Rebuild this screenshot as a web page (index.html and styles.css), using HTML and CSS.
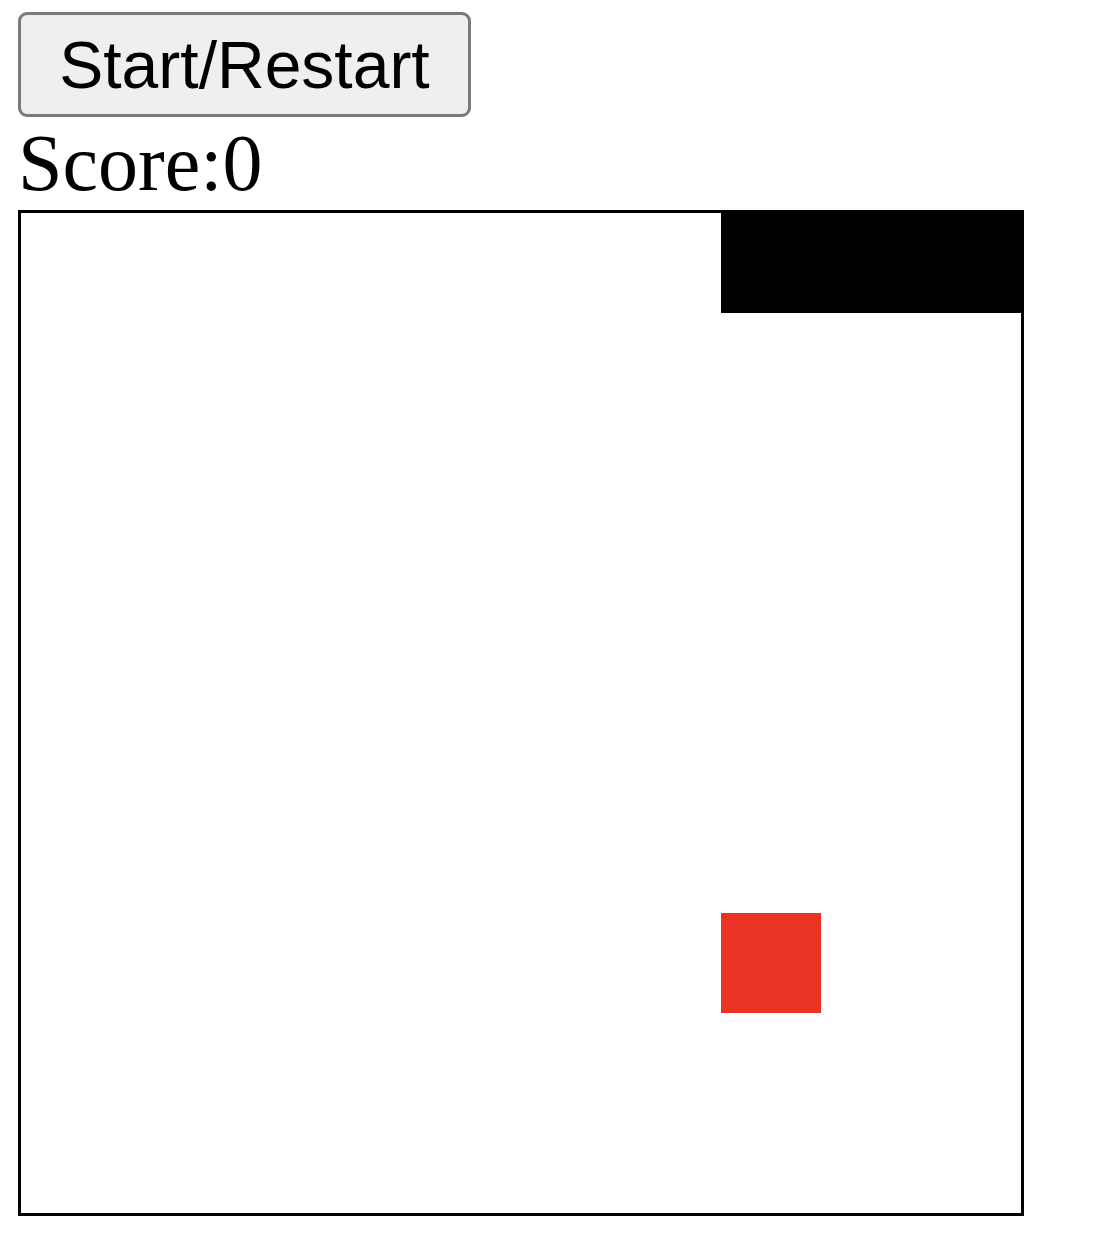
FILE: index.html
```html
<!DOCTYPE html>
<html lang="en">

<head>
  <meta charset="UTF-8" />
  <title>Snake</title>
  <link rel="stylesheet" href="styles.css">
</head>

<body>
  <button class="startBtn">Start/Restart</button>
  <div class="score">Score:<span id="score">0</span></div>
  <div class="board">
    <div class="snake"></div>
    <div class="food"></div>
  </div>
</body>

</html>
```

FILE: styles.css
```css
body {
  margin: 0;
  padding: 12px 18px;
  background: #ffffff;
  font-family: "Liberation Serif", serif;
}

.startBtn {
  display: block;
  box-sizing: border-box;
  height: 105px;
  width: 453px;
  padding: 0;
  font-family: "Liberation Sans", Arial, sans-serif;
  font-size: 66px;
  color: #000;
  background-color: #efefef;
  border: 3px solid #7a7a7a;
  border-radius: 9px;
}

.score {
  font-size: 80px;
  line-height: 93px;
  color: #000;
}

.board {
  width: 1000px;
  height: 1000px;
  border: 3px solid #000;
  display: grid;
  grid-template-columns: repeat(10, 100px);
  grid-template-rows: repeat(10, 100px);
}

.snake {
  grid-row: 1;
  grid-column: 8 / 11;
  background: #000;
}

.food {
  grid-row: 8;
  grid-column: 8;
  background: #ea3323;
}
```
